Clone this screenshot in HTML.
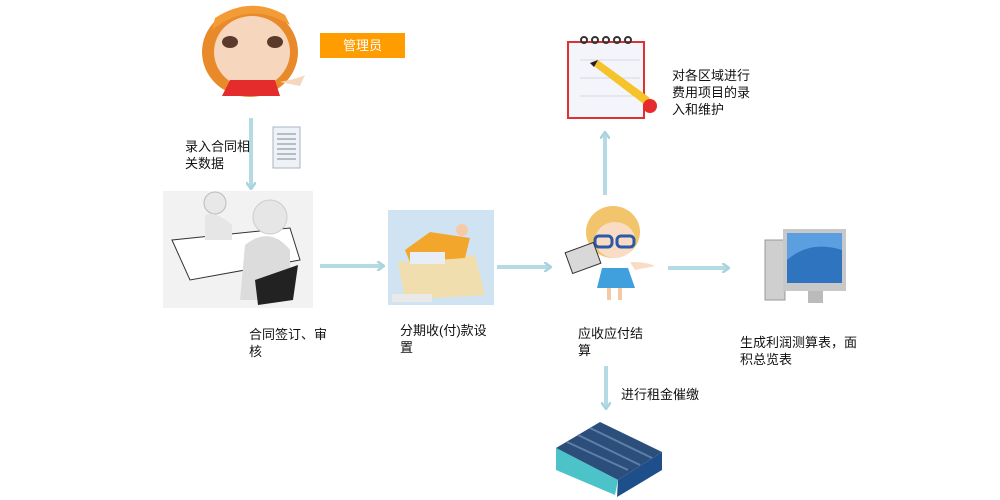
<!DOCTYPE html>
<html><head><meta charset="utf-8"><style>
body{margin:0;width:1000px;height:500px;background:#fff;position:relative;overflow:hidden;font-family:"Liberation Sans","Noto Sans CJK SC",sans-serif;font-size:13px;color:#111}
.a{position:absolute}
.t{position:absolute;line-height:17px;white-space:nowrap}
</style></head><body>
<svg class="a" style="left:0;top:0" width="1000" height="500">
<defs><marker id="m" markerWidth="8" markerHeight="10" refX="6" refY="5" orient="auto" markerUnits="userSpaceOnUse"><path d="M0 0 L7 5 L0 10" fill="none" stroke="#a9d4de" stroke-width="2.5"/></marker></defs>
<g stroke="#b4dbe4" stroke-width="4" marker-end="url(#m)">
<line x1="251" y1="118" x2="251" y2="188"/>
<line x1="320" y1="266" x2="383" y2="266"/>
<line x1="497" y1="267" x2="550" y2="267"/>
<line x1="668" y1="268" x2="728" y2="268"/>
<line x1="605" y1="195" x2="605" y2="133"/>
<line x1="606" y1="366" x2="606" y2="408"/>
</g>
<!-- girl -->
<ellipse cx="250" cy="52" rx="48" ry="45" fill="#e98a2a"/>
<ellipse cx="252" cy="52" rx="38" ry="36" fill="#f7d6be"/>
<path d="M212 30 Q250 0 290 25 L285 15 Q250 -5 215 18Z" fill="#f39b35"/>
<ellipse cx="230" cy="42" rx="8" ry="6" fill="#5a3a2a"/><ellipse cx="275" cy="42" rx="8" ry="6" fill="#5a3a2a"/>
<path d="M230 80 L275 80 L280 96 L222 96Z" fill="#e42c2c"/>
<path d="M280 82 Q300 78 305 75 L300 86Z" fill="#f7d6be"/>
<!-- doc -->
<rect x="273" y="127" width="27" height="41" fill="#eef2f6" stroke="#a8b4c2"/>
<g stroke="#7d8896"><line x1="277" y1="134" x2="296" y2="134"/><line x1="277" y1="139" x2="296" y2="139"/><line x1="277" y1="144" x2="296" y2="144"/><line x1="277" y1="149" x2="296" y2="149"/><line x1="277" y1="154" x2="296" y2="154"/><line x1="277" y1="159" x2="296" y2="159"/></g>
<!-- meeting -->
<rect x="163" y="191" width="150" height="117" fill="#f2f2f2"/>
<path d="M172 240 L290 228 L300 260 L190 280Z" fill="#fff" stroke="#333"/>
<circle cx="215" cy="203" r="11" fill="#e8e8e8" stroke="#bbb"/>
<path d="M205 215 Q215 210 232 225 L232 240 L205 240Z" fill="#e6e6e6"/>
<circle cx="270" cy="217" r="17" fill="#e6e6e6" stroke="#ccc"/>
<path d="M245 245 Q270 225 290 250 L290 300 L240 300Z" fill="#dcdcdc"/>
<path d="M255 280 L298 265 L293 300 L258 305Z" fill="#222"/>
<!-- box -->
<rect x="388" y="210" width="106" height="95" fill="#cfe3f3"/>
<path d="M398 262 L475 255 L485 295 L405 300Z" fill="#f1deae"/>
<path d="M405 250 L430 232 L470 238 L465 258 L410 262Z" fill="#f2a72c"/>
<rect x="410" y="252" width="35" height="12" fill="#e8eef8"/>
<circle cx="462" cy="230" r="6" fill="#f6caa5"/>
<rect x="392" y="294" width="40" height="8" fill="#e9e9e9"/>
<!-- calculator woman -->
<ellipse cx="613" cy="232" rx="27" ry="26" fill="#f2c46b"/>
<ellipse cx="615" cy="240" rx="20" ry="18" fill="#f9dcc3"/>
<rect x="595" y="236" width="17" height="11" rx="4" fill="none" stroke="#2a5aa8" stroke-width="3"/>
<rect x="617" y="236" width="17" height="11" rx="4" fill="none" stroke="#2a5aa8" stroke-width="3"/>
<rect x="568" y="247" width="30" height="22" transform="rotate(-20 583 258)" fill="#d8d8d8" stroke="#333"/>
<path d="M602 268 L628 268 L635 288 L597 288Z" fill="#3fa0dd"/>
<path d="M630 262 Q648 262 655 266 L635 270Z" fill="#f9dcc3"/>
<rect x="607" y="288" width="4" height="12" fill="#f4caa5"/><rect x="618" y="288" width="4" height="12" fill="#f4caa5"/>
<!-- computer -->
<rect x="765" y="240" width="20" height="60" fill="#cfcfcf" stroke="#999"/>
<rect x="783" y="229" width="63" height="62" fill="#c8c8c8"/>
<rect x="787" y="233" width="55" height="50" fill="#2f74bf"/>
<path d="M787 260 Q810 240 842 250 L842 233 L787 233Z" fill="#5b9fe0"/>
<rect x="808" y="291" width="15" height="12" fill="#bbb"/>
<!-- notepad -->
<rect x="568" y="42" width="76" height="76" fill="#f3f5fa" stroke="#e23030" stroke-width="2"/>
<g fill="none" stroke="#333" stroke-width="2"><circle cx="584" cy="40" r="3"/><circle cx="595" cy="40" r="3"/><circle cx="606" cy="40" r="3"/><circle cx="617" cy="40" r="3"/><circle cx="628" cy="40" r="3"/></g>
<g stroke="#d5dae2"><line x1="580" y1="60" x2="640" y2="60"/><line x1="580" y1="78" x2="640" y2="78"/><line x1="580" y1="96" x2="640" y2="96"/></g>
<path d="M590 63 L645 105 L650 98 L598 60Z" fill="#f5c42a"/>
<circle cx="650" cy="106" r="7" fill="#e52b2b"/>
<path d="M590 63 L598 60 L594 67Z" fill="#222"/>
<!-- warehouse -->
<path d="M556 448 L600 422 L662 452 L618 480Z" fill="#2c4e7a"/>
<path d="M556 448 L556 470 L615 495 L618 480Z" fill="#4cc3c8"/>
<path d="M618 480 L662 452 L662 470 L617 497Z" fill="#1e4f8a"/>
<g stroke="#5e7fa8" stroke-width="2"><line x1="567" y1="442" x2="628" y2="470"/><line x1="578" y1="435" x2="640" y2="465"/><line x1="590" y1="428" x2="652" y2="458"/></g>
</svg>
<div class="a" style="left:320px;top:33px;width:85px;height:25px;background:#ff9c00;color:#fff;text-align:center;line-height:25px">管理员</div>
<div class="t" style="left:185px;top:138px">录入合同相<br>关数据</div>
<div class="t" style="left:672px;top:67px">对各区域进行<br>费用项目的录<br>入和维护</div>
<div class="t" style="left:249px;top:326px">合同签订、审<br>核</div>
<div class="t" style="left:400px;top:322px">分期收(付)款设<br>置</div>
<div class="t" style="left:578px;top:325px">应收应付结<br>算</div>
<div class="t" style="left:740px;top:334px">生成利润测算表，面<br>积总览表</div>
<div class="t" style="left:621px;top:386px">进行租金催缴</div>
</body></html>
